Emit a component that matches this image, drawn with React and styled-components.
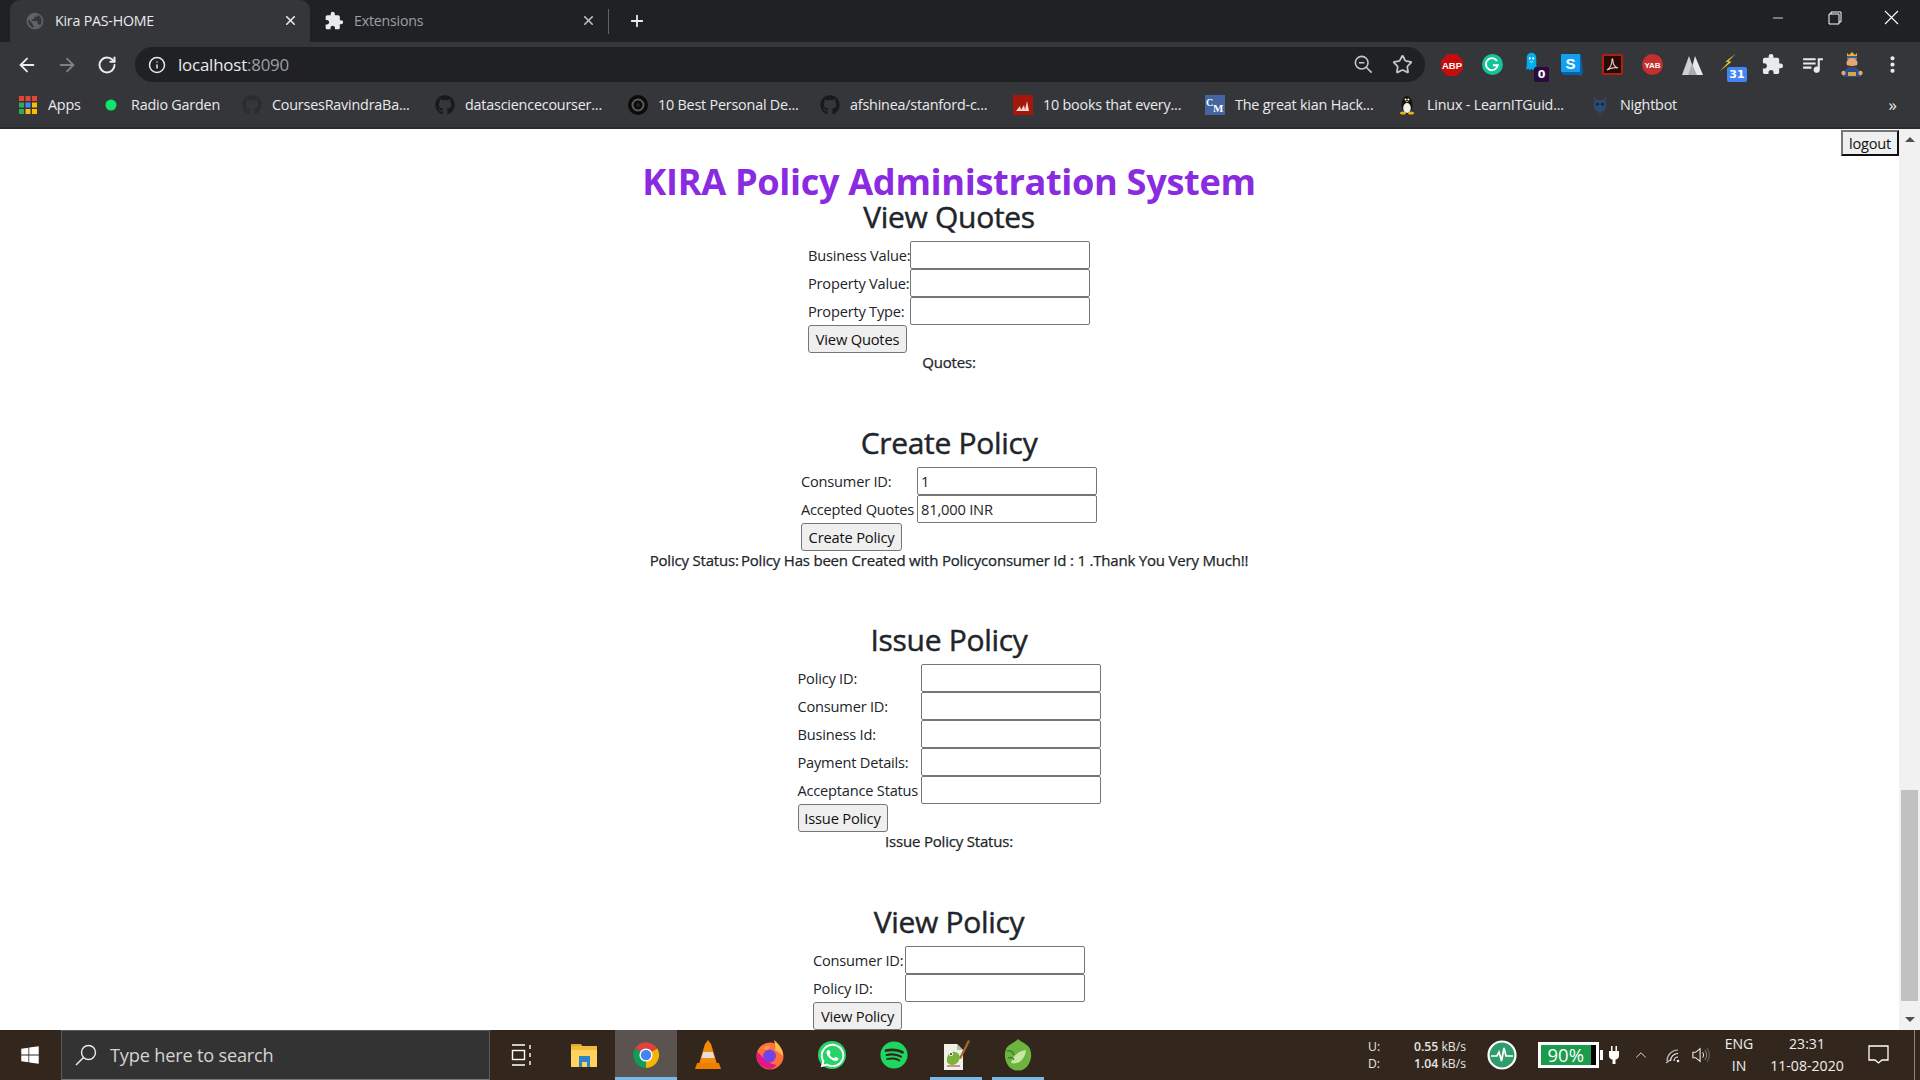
import React from "react";
import styled, { createGlobalStyle } from "styled-components";
import { ArrowLeft, ArrowRight, RotateCw, Info, Star, X, Plus, Minus, ChevronUp } from "lucide-react";
import { FaGithub, FaWindows, FaWhatsapp, FaSpotify } from "react-icons/fa";
import { MdExtension, MdQueueMusic, MdMoreVert, MdPublic } from "react-icons/md";

const FONT = `"Open Sans", "Noto Sans", sans-serif`;

const Global = createGlobalStyle`
  html, body { margin: 0; padding: 0; overflow: hidden; background: #fff; }
  * { box-sizing: border-box; }
  body { font-family: ${FONT}; }
`;

const Screen = styled.div`
  width: 1920px; height: 1080px; display: flex; flex-direction: column; overflow: hidden;
`;

/* tab strip */
const TabStrip = styled.div`
  height: 42px; flex: none; background: #202124; display: flex; align-items: stretch; padding-left: 10px; position: relative;
`;
const Tab = styled.div`
  width: ${p => p.$w}px; display: flex; align-items: center; gap: 10px; padding: 0 12px 1px ${p => p.$pl}px;
  background: ${p => (p.$active ? "#35363a" : "transparent")};
  border-radius: 10px 10px 0 0;
  color: ${p => (p.$active ? "#e8eaed" : "#9aa0a6")};
  font-size: 14.2px; letter-spacing: -0.2px; white-space: nowrap;
`;
const TabIcon = styled.span`
  width: 20px; height: 20px; display: flex; align-items: center; justify-content: center; flex: none;
`;
const TabClose = styled.span`
  margin-left: auto; display: flex; color: ${p => (p.$active ? "#e8eaed" : "#bdc1c6")};
`;
const TabSep = styled.div`
  width: 1px; height: 25px; background: #5f6368; align-self: center;
`;
const NewTab = styled.div`
  margin-left: 19px; width: 18px; display: flex; align-items: center; color: #e8eaed;
`;
const WindowControls = styled.div`
  margin-left: auto; display: flex; align-items: flex-start;
`;
const WinBtn = styled.div`
  width: 57px; height: 35px; display: flex; align-items: center; justify-content: center; color: #fff;
`;

/* toolbar */
const Toolbar = styled.div`
  height: 40px; flex: none; background: #35363a; display: flex; padding: 5px 8px 0 7px;
`;
const NavBtn = styled.div`
  width: 40px; height: 35px; display: flex; align-items: center; justify-content: center; color: ${p => p.$dim ? "#7d8085" : "#e8eaed"};
`;
const Omnibox = styled.div`
  flex: 1; height: 35px; margin: 0 7px 0 8px; border-radius: 18px; background: #202124; display: flex; align-items: center; padding: 0 12px 0 13px;
`;
const OmniText = styled.div`
  margin-left: 12px; font-size: 16.9px; letter-spacing: -0.2px; color: #e8eaed; white-space: nowrap;
  span { color: #9aa0a6; }
`;
const OmniActions = styled.div`
  margin-left: auto; display: flex; align-items: center; gap: 19px; color: #c4c7ca;
`;
const ExtBtn = styled.div`
  width: 40px; height: 35px; display: flex; align-items: center; justify-content: center; position: relative; color: #e8eaed;
`;
const Badge = styled.span`
  position: absolute; left: ${p => p.$l}px; top: 20px; min-width: ${p => p.$w}px; height: 15px; border-radius: 2px; background: ${p => p.$bg};
  color: #fff; font: 700 11px/15px "DejaVu Sans", sans-serif; text-align: center;
`;
const BadgedIcon = styled.span`
  display: flex; margin: 0 ${p => p.$mr}px ${p => p.$mb}px 0;
`;

/* bookmarks */
const Bookmarks = styled.div`
  height: 47px; flex: none; background: #35363a; display: flex; align-items: center; padding-left: 18px; border-bottom: 2px solid #2a2b2e; position: relative;
`;
const Bookmark = styled.div`
  display: flex; align-items: center; gap: 10px; flex: none;
`;
const BmIcon = styled.span`
  width: 20px; height: 20px; display: flex; align-items: center; justify-content: center; flex: none;
`;
const BmLabel = styled.span`
  width: ${p => p.$w}px; color: #e8eaed; font-size: 14.35px; letter-spacing: -0.2px; white-space: nowrap;
`;
const BmMore = styled.span`
  margin-left: auto; padding-right: 23px; color: #e8eaed; font-size: 17px; line-height: 20px;
`;

/* page */
const Viewport = styled.div`
  flex: 1; min-height: 0; display: flex;
`;
const Content = styled.main`
  flex: 1; position: relative; overflow: hidden; background: #fff; color: #212529; padding: 28px 1px 0 0; text-align: center;
`;
const Logout = styled.button`
  position: absolute; right: 0; top: 1px; width: 58px; height: 26px; padding: 0; background: #efefef;
  border: 2px solid; border-color: #767676 #101010 #101010 #767676;
  color: #111; font: 14.6px ${FONT}; letter-spacing: -0.2px;
`;
const Title = styled.h1`
  margin: 0; font-size: 36.2px; line-height: 48px; font-weight: 700; letter-spacing: -0.35px; color: #8a2be2;
`;
const SectionTitle = styled.h2`
  margin: 0; height: 36px; font-size: 30px; line-height: 24px; font-weight: 400; letter-spacing: -0.3px; color: #212529;
  -webkit-text-stroke: 0.45px #212529;
`;
const FormGrid = styled.div`
  display: grid; grid-template-columns: ${p => p.$label}px 180px; grid-auto-rows: 28px; justify-content: center; text-align: left;
`;
const FieldLabel = styled.label`
  font-size: 14.6px; letter-spacing: -0.2px; line-height: 28px; white-space: nowrap; overflow: visible;
`;
const Field = styled.input`
  width: 180px; height: 28px; border: 1px solid #767676; border-radius: 2px; background: #fff; padding: 1px 3px; margin: 0;
  color: #212529; font: 14.7px ${FONT}; letter-spacing: -0.2px;
  outline: none;
`;
const Submit = styled.button`
  grid-column: 1 / -1; justify-self: start; width: ${p => p.$w}px; height: 28px; padding: 0; background: #efefef;
  border: 1px solid #767676; border-radius: 3px; color: #111; font: 14.7px ${FONT}; letter-spacing: -0.2px; white-space: nowrap;
`;
const Status = styled.p`
  margin: 0 0 ${p => p.$after}px; height: 20px; line-height: 19px; font-size: 15px; font-weight: 400; letter-spacing: -0.2px; white-space: nowrap;
  -webkit-text-stroke: 0.25px #212529;
`;

/* scrollbar */
const Scrollbar = styled.div`
  width: 21px; flex: none; background: #f1f1f1; display: flex; flex-direction: column;
`;
const ScrollArrow = styled.div`
  height: 21px; flex: none; display: flex; align-items: center; justify-content: center;
  &::before {
    content: ""; border-left: 5px solid transparent; border-right: 5px solid transparent;
    ${p => (p.$down ? "border-top: 5px solid #505050;" : "border-bottom: 5px solid #505050;")}
  }
`;
const ScrollTrack = styled.div`
  flex: 1; padding: 640px 2px 0;
`;
const ScrollThumb = styled.div`
  height: 211px; background: #c1c1c1;
`;

/* taskbar */
const Taskbar = styled.footer`
  height: 50px; flex: none; background: #33261d; display: flex; align-items: stretch; color: #fff;
`;
const StartBtn = styled.div`
  width: 61px; display: flex; align-items: center; justify-content: center; padding-right: 2px;
`;
const SearchBox = styled.div`
  width: 429px; background: #333333; border: 1px solid #5a5a5a; border-bottom-color: #777; display: flex; align-items: center; padding-left: 13px;
`;
const SearchText = styled.span`
  margin-left: 13px; color: #d4d4d4; font-size: 18.2px; letter-spacing: -0.2px; white-space: nowrap;
`;
const TaskBtn = styled.div`
  width: ${p => p.$w || 62}px; flex: none; display: flex; align-items: center; justify-content: center; position: relative;
  background: ${p => (p.$active ? "#5b5350" : "transparent")};
  &::after {
    content: ""; position: absolute; bottom: 0; left: ${p => (p.$active ? 0 : "5px")}; right: ${p => (p.$active ? 0 : "5px")};
    height: 3px; background: ${p => (p.$active || p.$open ? "#76b9ed" : "transparent")};
  }
`;
const Tray = styled.div`
  margin-left: auto; display: flex; align-items: center;
`;
const NetStats = styled.div`
  width: 98px; display: grid; grid-template-columns: 1fr auto; row-gap: 1px; font-size: 12.2px; line-height: 16px; color: #e6e6e6;
  b { font-weight: 600; }
  span:nth-child(even) { text-align: right; }
`;
const TrayItem = styled.div`
  margin-left: ${p => p.$ml}px; display: flex; align-items: center; justify-content: center; width: ${p => p.$w}px; flex: none; color: #eee;
`;
const Battery = styled.div`
  margin-left: 21px; width: 61px; height: 26px; border: 3px solid #fff; background: #000; position: relative; flex: none;
  &::after { content: ""; position: absolute; right: -7px; top: 5px; width: 3px; height: 10px; background: #fff; }
`;
const BatteryFill = styled.div`
  height: 100%; background: #1a9c4c; color: #fff; font-size: 18.5px; line-height: 19px; text-align: center;
`;
const TwoLine = styled.div`
  margin-left: ${p => p.$ml}px; width: ${p => p.$w}px; flex: none; text-align: center; color: #eee; font-size: 14.1px; line-height: 22px; white-space: nowrap;
`;
const DesktopEdge = styled.div`
  margin-left: 25px; margin-right: 5px; width: 1px; align-self: stretch; background: #8a8580;
`;
const WaWrap = styled.span`
  width: 28px; height: 28px; display: flex; align-items: center; justify-content: center; border-radius: 50%; background: #25d366;
`;

/* drawings */
const Svg = ({ s = 20, w, h, vb = "0 0 20 20", children }) => (
  <svg width={w || s} height={h || s} viewBox={vb}>{children}</svg>
);

const AppsIcon = () => {
  const colors = ["#ea4335", "#ea4335", "#ea4335", "#34a853", "#4285f4", "#fbbc05", "#34a853", "#fbbc05", "#fbbc05"];
  return (
    <Svg s={18} vb="0 0 18 18">
      {colors.map((c, i) => <rect key={i} x={(i % 3) * 6.5} y={Math.floor(i / 3) * 6.5} width="5" height="5" fill={c} />)}
    </Svg>
  );
};
const GreenDot = () => <Svg s={12} vb="0 0 12 12"><circle cx="6" cy="6" r="5.5" fill="#0ee56c" /></Svg>;
const TargetIcon = () => (
  <Svg><circle cx="10" cy="10" r="10" fill="#0b0b0b" /><circle cx="10" cy="10" r="5.5" fill="none" stroke="#5a5a5a" strokeWidth="2" /><circle cx="10" cy="10" r="2" fill="#222" /></Svg>
);
const RedBooks = () => (
  <Svg><rect width="20" height="20" fill="#a5170c" /><path d="M3 16l4-5 1 4 3-5 1 5 2-9 2 10z" fill="#f6d9d5" /></Svg>
);
const CimIcon = () => (
  <Svg>
    <rect width="20" height="20" fill="#44659f" />
    <text x="1" y="11" fontSize="10" fontWeight="700" fill="#fff" fontFamily="Liberation Serif">C</text>
    <text x="8" y="17" fontSize="11" fontWeight="700" fill="#fff" fontFamily="Liberation Serif">M</text>
  </Svg>
);
const Tux = () => (
  <Svg>
    <ellipse cx="10" cy="10" rx="5.5" ry="9" fill="#14130f" />
    <ellipse cx="10" cy="13" rx="3.8" ry="5" fill="#f2f0ea" />
    <circle cx="8.6" cy="4.5" r="1" fill="#fff" /><circle cx="11.4" cy="4.5" r="1" fill="#fff" />
    <path d="M8.5 6h3l-1.5 1.5z" fill="#e9b21c" />
    <ellipse cx="6" cy="18" rx="3" ry="1.6" fill="#e9b21c" /><ellipse cx="14" cy="18" rx="3" ry="1.6" fill="#e9b21c" />
  </Svg>
);
const Nightbot = () => (
  <Svg>
    <path d="M4 2l3 3h6l3-3v9c0 4-3 6-6 6s-6-2-6-6z" fill="#2d4a6e" />
    <circle cx="7.5" cy="9" r="1.6" fill="#14263d" /><circle cx="12.5" cy="9" r="1.6" fill="#14263d" />
    <rect x="8" y="17" width="4" height="3" fill="#25405f" />
  </Svg>
);

const Abp = () => (
  <Svg s={22} vb="0 0 22 22">
    <path d="M6.5 0h9L22 6.5v9L15.5 22h-9L0 15.5v-9z" fill="#c70d0c" />
    <text x="11" y="14.5" textAnchor="middle" fontSize="9.5" fontWeight="700" fill="#fff" fontFamily="Liberation Sans">ABP</text>
  </Svg>
);
const Gram = () => (
  <Svg s={21} vb="0 0 21 21">
    <circle cx="10.5" cy="10.5" r="10.5" fill="#15c39a" />
    <path d="M15 7a6 6 0 1 0 .8 4.2H11" fill="none" stroke="#fff" strokeWidth="1.9" />
  </Svg>
);
const Ghost = () => (
  <Svg w={13} h={19} vb="0 0 16 24">
    <path d="M8 1c4 0 6 3 6 7v9l1 5-3-1-2 2-2-2-2 2-2-2-3 1 1-5V8c0-4 2-7 6-7z" fill="#00aeef" />
    <ellipse cx="5.8" cy="8" rx="1.2" ry="1.8" fill="#fff" /><ellipse cx="10.2" cy="8" rx="1.2" ry="1.8" fill="#fff" />
    <path d="M6 12q2 1.500 4 0" stroke="#fff" fill="none" />
  </Svg>
);
const Skype = () => (
  <Svg s={22} vb="0 0 22 22">
    <path d="M3 0h17l2 19-2 3-3-1H2L0 18V2z" fill="#0b5ea6" />
    <rect width="19" height="18" rx="1" fill="#14a0f0" />
    <text x="9.5" y="14.5" textAnchor="middle" fontSize="15" fontWeight="700" fill="#fff" fontFamily="Liberation Sans">S</text>
  </Svg>
);
const Acrobat = () => (
  <Svg s={21} vb="0 0 21 21">
    <rect x="1" y="1" width="19" height="19" rx="1" fill="#250a06" stroke="#b1200f" strokeWidth="2" />
    <path d="M5 16c3-2 5-6 5-10 0-2 1-1 1 1 0 3 2 6 5 7-3-1-7 0-11 2z" fill="none" stroke="#e9c7c0" strokeWidth="1.1" />
  </Svg>
);
const Yab = () => (
  <Svg s={21} vb="0 0 21 21">
    <circle cx="10.5" cy="10.5" r="10.5" fill="#c62f2f" />
    <text x="10.5" y="13.5" textAnchor="middle" fontSize="8" fontWeight="700" fill="#fff" fontFamily="Liberation Sans">YAB</text>
  </Svg>
);
const Peaks = () => (
  <Svg w={21} h={20} vb="0 0 21 20">
    <path d="M7 1l7 19H0z" fill="#cfd0d2" /><path d="M13 1l8 19H8z" fill="#e8e8e8" /><path d="M10 9l5 11H6z" fill="#a9abae" />
  </Svg>
);
const Bolt = () => (
  <Svg s={19} vb="0 0 24 24">
    <path d="M21 1L8 11l4 .5L1 23l15-12-4-.5z" fill="#e7c531" />
  </Svg>
);
const KingAvatar = () => (
  <Svg s={26} vb="0 0 26 26">
    <path d="M8 1l2 2 3-3 3 3 2-2v6H8z" fill="#e9b830" />
    <rect x="8" y="4" width="10" height="2.5" fill="#3a5ea8" />
    <ellipse cx="13" cy="11" rx="5.5" ry="5" fill="#e0a877" />
    <path d="M8 13q5 2 10 0l-1 3H9z" fill="#5a3418" />
    <path d="M4 25c0-7 4-10 9-10s9 3 9 10z" fill="#2d4b88" />
    <rect x="9" y="20" width="8" height="4" fill="#d9a63a" />
    <circle cx="4.5" cy="21" r="2.2" fill="#e0a877" /><circle cx="21.5" cy="21" r="2.2" fill="#e0a877" />
  </Svg>
);

const TaskView = () => (
  <Svg s={22} vb="0 0 22 22">
    <g fill="none" stroke="#fff" strokeWidth="1.4">
      <path d="M1 1h13M1 21h13" /><rect x="1.5" y="6.5" width="12" height="9" /><path d="M19 1v4M19 9v4M19 17v4" />
    </g>
  </Svg>
);
const Explorer = () => (
  <Svg s={28} vb="0 0 28 28">
    <path d="M1 3h10l2 3H1z" fill="#e0a526" />
    <rect x="1" y="5" width="26" height="21" fill="#ffd35c" />
    <rect x="1" y="5" width="26" height="4" fill="#f2bb3e" />
    <rect x="9" y="15" width="11" height="11" fill="#2f84c9" /><rect x="12" y="21" width="5" height="5" fill="#ffd35c" />
  </Svg>
);
const ChromeLogo = () => (
  <Svg s={28} vb="0 0 28 28">
    <path d="M14 14L3 7.6A13 13 0 0 1 25.3 7.5z" fill="#db4437" />
    <path d="M14 14L3 7.6A13 13 0 0 0 14 27z" fill="#0f9d58" />
    <path d="M14 14l11.3-6.5A13 13 0 0 1 14 27z" fill="#f4b400" />
    <circle cx="14" cy="14" r="6.6" fill="#fff" /><circle cx="14" cy="14" r="5.2" fill="#4285f4" />
  </Svg>
);
const Vlc = () => (
  <Svg w={26} h={30} vb="0 0 26 30">
    <path d="M13 0l3 4 6 20H4l6-20z" fill="#f28a0c" />
    <path d="M8.200 12h9.600l1.800 6H6.400z" fill="#e4e0d8" />
    <path d="M2 23h22l2 6H0z" fill="#ef7d00" />
  </Svg>
);
const Firefox = () => (
  <Svg w={28} h={30} vb="0 0 28 30">
    <circle cx="14" cy="16" r="13.5" fill="#ff7139" />
    <path d="M14 29A13.5 13.5 0 0 1 1 12c4 2 9 12 20 13a13 13 0 0 1-7 4z" fill="#e31587" />
    <path d="M18 0c5 4 9 9 9 16-3-3-6-5-8-6 1-3 0-6-1-10z" fill="#ffbd4f" />
    <circle cx="13.5" cy="16" r="6.5" fill="#7542e5" />
    <path d="M6 9c2-3 6-4 9-3l-3 4z" fill="#ff9640" />
  </Svg>
);
const WhatsApp = () => (
  <WaWrap><FaWhatsapp size={27} color="#fff" /></WaWrap>
);
const Notepad = () => (
  <Svg w={28} h={30} vb="0 0 28 30">
    <path d="M2 4h13l6 6v20H2z" fill="#eef2e6" /><path d="M15 4v6h6z" fill="#b7c0a6" />
    <path d="M5 22c-1-6 3-11 8-10s6 6 3 10-9 4-11 0z" fill="#7fb23c" />
    <circle cx="9" cy="14" r="2" fill="#fff" /><circle cx="9" cy="14" r="1" fill="#222" />
    <path d="M5 26h13" stroke="#a33" strokeWidth="1" />
    <path d="M26 0l2 1-9 18-2-1z" fill="#a8662b" />
  </Svg>
);
const Spring = () => (
  <Svg w={28} h={32} vb="0 0 28 32">
    <path d="M14 0c3 3 10 5 12 10 3 7 0 17-6 20-3 2-9 2-12 0C2 27-1 17 2 10 4 5 11 4 14 0z" fill="#6db33f" />
    <path d="M7 24c2-8 8-12 15-13-1 9-7 15-15 13z" fill="#c8e6a6" />
    <path d="M3 12c4-1 6 1 7 4M4 19c3-1 5 0 6 2" stroke="#3f7f22" strokeWidth="1.5" fill="none" />
  </Svg>
);
const Pulse = () => (
  <Svg s={30} vb="0 0 30 30">
    <circle cx="15" cy="15" r="13.5" fill="#2e9d6b" stroke="#fff" strokeWidth="2.2" />
    <path d="M4 16h6l2-4 2.5 9 2.5-13 2 8h7" fill="none" stroke="#fff" strokeWidth="1.7" />
  </Svg>
);
const PlugIcon = () => (
  <Svg w={10} h={18} vb="0 0 10 18">
    <path d="M2 0h1.500v5H2zM6.500 0H8v5H6.500zM0 5h10v5c0 2-2 3.500-3.500 3.500V18h-3v-4.500C2 13.500 0 12 0 10z" fill="#fff" />
  </Svg>
);
const WifiArc = () => (
  <Svg s={18} vb="0 0 18 18">
    <circle cx="13" cy="15" r="1.3" fill="#eee" />
    <g fill="none" strokeWidth="1.2">
      <path d="M9 15a4 4 0 0 1 4-4" stroke="#eee" /><path d="M5.500 15a7.500 7.500 0 0 1 7.500-7.500" stroke="#eee" />
      <path d="M2 15A11 11 0 0 1 13 4" stroke="#bbb" /><path d="M1 17l4-3" stroke="#ccc" />
    </g>
  </Svg>
);
const SpeakerIcon = () => (
  <Svg>
    <path d="M1 7h3l5-4v14l-5-4H1z" fill="none" stroke="#eee" strokeWidth="1.2" />
    <path d="M12 7q2 3 0 6" fill="none" stroke="#eee" strokeWidth="1.1" />
    <path d="M14.500 4.500q3.500 5.500 0 11" fill="none" stroke="#8f8a85" strokeWidth="1.1" />
    <path d="M17 2.500q4.500 7.500 0 15" fill="none" stroke="#6f6a65" strokeWidth="1.1" />
  </Svg>
);
const SearchGlass = () => (
  <Svg s={22} vb="0 0 22 22">
    <circle cx="13.5" cy="8.5" r="7" fill="none" stroke="#eee" strokeWidth="1.4" /><path d="M8.500 13.500L1 21" stroke="#eee" strokeWidth="1.4" />
  </Svg>
);
const NotificationIcon = () => (
  <Svg w={21} h={20} vb="0 0 21 20">
    <path d="M1 1h19v14h-6l-3.500 3L7 15H1z" fill="none" stroke="#fff" strokeWidth="1.3" />
  </Svg>
);

const bookmarks = [
  { icon: <AppsIcon />, label: "Apps", w: 53 },
  { icon: <GreenDot />, label: "Radio Garden", w: 111 },
  { icon: <FaGithub size={20} color="#2b2c30" />, label: "CoursesRavindraBa...", w: 163 },
  { icon: <FaGithub size={20} color="#18191b" />, label: "datasciencecourser...", w: 163 },
  { icon: <TargetIcon />, label: "10 Best Personal De...", w: 162 },
  { icon: <FaGithub size={20} color="#18191b" />, label: "afshinea/stanford-c...", w: 163 },
  { icon: <RedBooks />, label: "10 books that every...", w: 162 },
  { icon: <CimIcon />, label: "The great kian Hack...", w: 162 },
  { icon: <Tux />, label: "Linux - LearnITGuid...", w: 163 },
  { icon: <Nightbot />, label: "Nightbot", w: 70 },
];

const sections = [
  {
    title: "View Quotes", label: 102, button: "View Quotes", btnW: 99, status: "Quotes:", after: 58,
    fields: [["Business Value:"], ["Property Value:"], ["Property Type:"]],
  },
  {
    title: "Create Policy", label: 116, button: "Create Policy", btnW: 101, status: "Policy Status:\u2009Policy Has been Created with Policyconsumer Id : 1 .Thank You Very Much!!", after: 57,
    fields: [["Consumer ID:", "1"], ["Accepted Quotes", "81,000 INR"]],
  },
  {
    title: "Issue Policy", label: 123, button: "Issue Policy", btnW: 90, status: "Issue Policy Status:", after: 58,
    fields: [["Policy ID:"], ["Consumer ID:"], ["Business Id:"], ["Payment Details:"], ["Acceptance Status"]],
  },
  {
    title: "View Policy", label: 92, button: "View Policy", btnW: 89,
    fields: [["Consumer ID:"], ["Policy ID:"]],
  },
];

export default function App() {
  return (
    <Screen>
      <Global />
      <TabStrip>
        <Tab $active $w={300} $pl={15}>
          <TabIcon><MdPublic size={20} color="#5f6368" /></TabIcon>
          Kira PAS-HOME
          <TabClose $active><X size={15} strokeWidth={2.6} /></TabClose>
        </Tab>
        <Tab $w={298} $pl={14}>
          <TabIcon><MdExtension size={22} color="#e8eaed" /></TabIcon>
          Extensions
          <TabClose><X size={15} strokeWidth={2.6} /></TabClose>
        </Tab>
        <TabSep />
        <NewTab><Plus size={20} strokeWidth={2.4} /></NewTab>
        <WindowControls>
          <WinBtn><Minus size={16} strokeWidth={1.2} /></WinBtn>
          <WinBtn>
            <Svg s={14} vb="0 0 14 14"><path d="M3 3V1h10v10h-2M1 3h10v10H1z" fill="none" stroke="#fff" strokeWidth="1" /></Svg>
          </WinBtn>
          <WinBtn>
            <Svg s={15} vb="0 0 15 15"><path d="M1 1l13 13M14 1L1 14" stroke="#fff" strokeWidth="1.1" /></Svg>
          </WinBtn>
        </WindowControls>
      </TabStrip>

      <Toolbar>
        <NavBtn><ArrowLeft size={22} strokeWidth={2} /></NavBtn>
        <NavBtn $dim><ArrowRight size={22} strokeWidth={2} /></NavBtn>
        <NavBtn><RotateCw size={20} strokeWidth={2.4} /></NavBtn>
        <Omnibox>
          <Info size={18} color="#e8eaed" strokeWidth={2} />
          <OmniText>localhost<span>:8090</span></OmniText>
          <OmniActions>
            <Svg s={19} vb="0 0 21 21">
              <circle cx="8.500" cy="8.500" r="7" fill="none" stroke="#c4c7ca" strokeWidth="1.800" />
              <path d="M5.500 8.500h6M13.500 13.500l6 6" stroke="#c4c7ca" strokeWidth="1.800" />
            </Svg>
            <Star size={21} strokeWidth={2} />
          </OmniActions>
        </Omnibox>
        <ExtBtn><Abp /></ExtBtn>
        <ExtBtn><Gram /></ExtBtn>
        <ExtBtn><BadgedIcon $mr={2} $mb={7}><Ghost /></BadgedIcon><Badge $l={22} $w={15} $bg="#2b0a3d">0</Badge></ExtBtn>
        <ExtBtn><Skype /></ExtBtn>
        <ExtBtn><Acrobat /></ExtBtn>
        <ExtBtn><Yab /></ExtBtn>
        <ExtBtn><Peaks /></ExtBtn>
        <ExtBtn><BadgedIcon $mr={8} $mb={5}><Bolt /></BadgedIcon><Badge $l={15} $w={20} $bg="#4285f4">31</Badge></ExtBtn>
        <ExtBtn><MdExtension size={23} /></ExtBtn>
        <ExtBtn><MdQueueMusic size={25} /></ExtBtn>
        <ExtBtn><KingAvatar /></ExtBtn>
        <ExtBtn><MdMoreVert size={25} /></ExtBtn>
      </Toolbar>

      <Bookmarks>
        {bookmarks.map(b => (
          <Bookmark key={b.label}>
            <BmIcon>{b.icon}</BmIcon>
            <BmLabel $w={b.w}>{b.label}</BmLabel>
          </Bookmark>
        ))}
        <BmMore>»</BmMore>
      </Bookmarks>

      <Viewport>
        <Content>
          <Logout>logout</Logout>
          <Title>KIRA Policy Administration System</Title>
          {sections.map(s => (
            <section key={s.title}>
              <SectionTitle>{s.title}</SectionTitle>
              <FormGrid $label={s.label}>
                {s.fields.map(([label, value]) => (
                  <React.Fragment key={label}>
                    <FieldLabel>{label}</FieldLabel>
                    <Field readOnly value={value || ""} />
                  </React.Fragment>
                ))}
                <Submit $w={s.btnW}>{s.button}</Submit>
              </FormGrid>
              {s.status && <Status $after={s.after}>{s.status}</Status>}
            </section>
          ))}
        </Content>
        <Scrollbar>
          <ScrollArrow />
          <ScrollTrack><ScrollThumb /></ScrollTrack>
          <ScrollArrow $down />
        </Scrollbar>
      </Viewport>

      <Taskbar>
        <StartBtn><FaWindows size={20} color="#fff" /></StartBtn>
        <SearchBox><SearchGlass /><SearchText>Type here to search</SearchText></SearchBox>
        <TaskBtn $w={63}><TaskView /></TaskBtn>
        <TaskBtn><Explorer /></TaskBtn>
        <TaskBtn $active><ChromeLogo /></TaskBtn>
        <TaskBtn><Vlc /></TaskBtn>
        <TaskBtn><Firefox /></TaskBtn>
        <TaskBtn><WhatsApp /></TaskBtn>
        <TaskBtn><FaSpotify size={28} color="#1ed760" /></TaskBtn>
        <TaskBtn $open><Notepad /></TaskBtn>
        <TaskBtn $open><Spring /></TaskBtn>
        <Tray>
          <NetStats>
            <span>U:</span><span><b>0.55</b> kB/s</span>
            <span>D:</span><span><b>1.04</b> kB/s</span>
          </NetStats>
          <TrayItem $ml={21} $w={30}><Pulse /></TrayItem>
          <Battery><BatteryFill style={{ width: "90%" }}>90%</BatteryFill></Battery>
          <TrayItem $ml={7} $w={16}><PlugIcon /></TrayItem>
          <TrayItem $ml={10} $w={18}><ChevronUp size={30} strokeWidth={1.2} /></TrayItem>
          <TrayItem $ml={15} $w={18}><WifiArc /></TrayItem>
          <TrayItem $ml={9} $w={18}><SpeakerIcon /></TrayItem>
          <TwoLine $ml={9} $w={40}>ENG<br />IN</TwoLine>
          <TwoLine $ml={3} $w={90}>23:31<br />11-08-2020</TwoLine>
          <TrayItem $ml={16} $w={21}><NotificationIcon /></TrayItem>
          <DesktopEdge />
        </Tray>
      </Taskbar>
    </Screen>
  );
}
